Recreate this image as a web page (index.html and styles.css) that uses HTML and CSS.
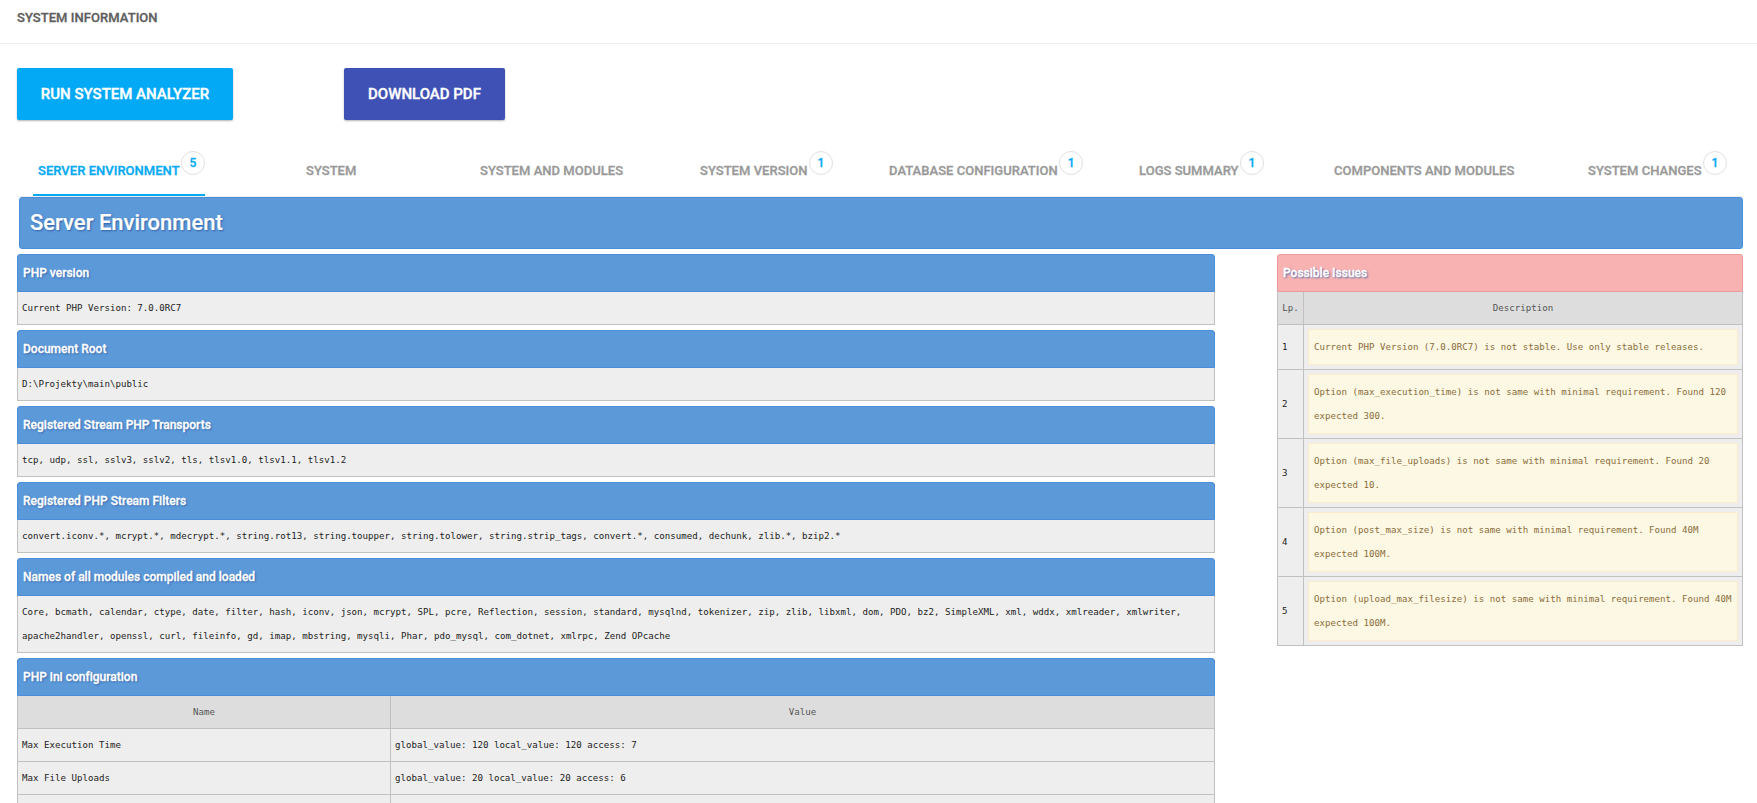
FILE: index.html
```html
<!DOCTYPE html>
<html lang="en">
<head>
<meta charset="utf-8">
<title>System Information</title>
<link rel="stylesheet" href="styles.css">
</head>
<body>
<header class="page-header"><h1>System Information</h1></header>
<main class="content">
  <div class="actions">
    <button class="btn btn-run">Run System Analyzer</button>
    <button class="btn btn-pdf">Download PDF</button>
  </div>
  <nav class="tabs">
    <a class="tab active"><span class="label">Server Environment</span><span class="badge">5</span></a>
    <a class="tab"><span class="label">System</span></a>
    <a class="tab"><span class="label">System and Modules</span></a>
    <a class="tab"><span class="label">System Version</span><span class="badge">1</span></a>
    <a class="tab"><span class="label">Database Configuration</span><span class="badge">1</span></a>
    <a class="tab"><span class="label">Logs Summary</span><span class="badge">1</span></a>
    <a class="tab"><span class="label">Components and Modules</span></a>
    <a class="tab"><span class="label">System Changes</span><span class="badge">1</span></a>
  </nav>
  <h2 class="banner">Server Environment</h2>
  <div class="columns">
    <div class="left">
      <section class="panel"><h3>PHP version</h3><p>Current PHP Version: 7.0.0RC7</p></section>
      <section class="panel"><h3>Document Root</h3><p>D:\Projekty\main\public</p></section>
      <section class="panel"><h3>Registered Stream PHP Transports</h3><p>tcp, udp, ssl, sslv3, sslv2, tls, tlsv1.0, tlsv1.1, tlsv1.2</p></section>
      <section class="panel"><h3>Registered PHP Stream Filters</h3><p>convert.iconv.*, mcrypt.*, mdecrypt.*, string.rot13, string.toupper, string.tolower, string.strip_tags, convert.*, consumed, dechunk, zlib.*, bzip2.*</p></section>
      <section class="panel"><h3>Names of all modules compiled and loaded</h3><p>Core, bcmath, calendar, ctype, date, filter, hash, iconv, json, mcrypt, SPL, pcre, Reflection, session, standard, mysqlnd, tokenizer, zip, zlib, libxml, dom, PDO, bz2, SimpleXML, xml, wddx, xmlreader, xmlwriter, <br>apache2handler, openssl, curl, fileinfo, gd, imap, mbstring, mysqli, Phar, pdo_mysql, com_dotnet, xmlrpc, Zend OPcache</p></section>
      <section class="panel">
        <h3>PHP ini configuration</h3>
        <table class="ini">
          <colgroup><col class="col-name"><col></colgroup>
          <tr><th>Name</th><th>Value</th></tr>
          <tr><td>Max Execution Time</td><td>global_value: 120 local_value: 120 access: 7</td></tr>
          <tr><td>Max File Uploads</td><td>global_value: 20 local_value: 20 access: 6</td></tr>
          <tr><td>&nbsp;</td><td>&nbsp;</td></tr>
        </table>
      </section>
    </div>
    <section class="panel issues">
      <h3>Possible Issues</h3>
      <table>
        <colgroup><col class="col-lp"><col></colgroup>
        <tr><th>Lp.</th><th>Description</th></tr>
        <tr><td>1</td><td><div class="warning">Current PHP Version (7.0.0RC7) is not stable. Use only stable releases.</div></td></tr>
        <tr><td>2</td><td><div class="warning">Option (max_execution_time) is not same with minimal requirement. Found 120<br>expected 300.</div></td></tr>
        <tr><td>3</td><td><div class="warning">Option (max_file_uploads) is not same with minimal requirement. Found 20<br>expected 10.</div></td></tr>
        <tr><td>4</td><td><div class="warning">Option (post_max_size) is not same with minimal requirement. Found 40M<br>expected 100M.</div></td></tr>
        <tr><td>5</td><td><div class="warning">Option (upload_max_filesize) is not same with minimal requirement. Found 40M<br>expected 100M.</div></td></tr>
      </table>
    </section>
  </div>
</main>
</body>
</html>
```
FILE: styles.css
```css
* { box-sizing: border-box; }
html, body { margin: 0; height: 803px; overflow: hidden; }
body { background: #fff; font-family: Roboto, "Open Sans", sans-serif; }
h1, h2, h3, p { margin: 0; }

.page-header { height: 44px; padding: 8px 17px 0; border-bottom: 1px solid #eee; }
.page-header h1 { font-size: 13px; line-height: 20px; font-weight: 500; letter-spacing: .05px; text-transform: uppercase; color: #5e5e5e; -webkit-text-stroke: .3px; }

.content { padding: 24px 14px 0 17px; }
.actions { display: flex; gap: 111px; }
.btn { height: 52px; padding: 0; border: 0; border-radius: 2px; color: #fff; font: 500 15px/52px Roboto, sans-serif; text-transform: uppercase; box-shadow: 0 1px 2px rgba(0, 0, 0, .3); -webkit-text-stroke: .35px; }
.btn-run { width: 216px; background: #03a9f4; }
.btn-pdf { width: 161px; background: #3f51b5; }

.tabs { display: grid; grid-template-columns: 268px 174px 220px 189px 250px 195px 254px 1fr; height: 77px; padding-left: 16px; border-bottom: 1px solid #eee; }
.tab { display: flex; justify-self: start; align-items: flex-start; height: 76px; padding: 31px 0 0 5px; color: #999; font-size: 13px; line-height: 40px; font-weight: 500; letter-spacing: .03px; text-transform: uppercase; white-space: nowrap; -webkit-text-stroke: .3px; }
.tab.active { color: #03a9f4; border-bottom: 2px solid #03a9f4; }
.badge { width: 24px; height: 24px; margin-left: 1.4px; border: 1px solid #e0e0e0; border-radius: 50%; color: #03a9f4; font-size: 12px; line-height: 22px; text-align: center; }

.banner { height: 52px; margin-left: 2px; padding-left: 10px; border: 1px solid #4a8edb; border-radius: 3px; background: #5c99d9; color: #fff; font-size: 22px; line-height: 49px; font-weight: 500; text-shadow: 1px 1px 2px #2f5fa5; -webkit-text-stroke: .2px; }

.columns { display: grid; grid-template-columns: 1198px 466px; gap: 62px; align-items: start; margin-top: 5px; }
.left { display: grid; gap: 5px; }
.panel { font: 9.13px/24px "DejaVu Sans Mono", monospace; color: #222; }
.panel h3 { height: 38px; padding-left: 5px; border: 1px solid #4a8edb; border-radius: 3px 3px 0 0; background: #5c99d9; color: #fff; font: 500 12px/36px Roboto, sans-serif; letter-spacing: .01px; text-shadow: 1px 1px 2px #2f5fa5; -webkit-text-stroke: .3px; }
.panel p { padding: 4px; border: 1px solid #c1c1c1; border-top: 0; background: #eee; white-space: nowrap; }
.panel table { width: 100%; table-layout: fixed; border-spacing: 0; border-left: 1px solid #c1c1c1; background: #eee; }
.panel th, .panel td { padding: 4px; border-right: 1px solid #c1c1c1; border-bottom: 1px solid #c1c1c1; white-space: nowrap; }
.panel th { background: #ddd; color: #555; font-weight: 400; text-align: center; }
.col-name { width: 373px; }
.col-lp { width: 26px; }
.panel.issues h3 { border-color: #e89a9d; background: #f9b2b2; }
.warning { padding: 5px; border: 1px solid #faebcc; background: #fcf8e3; color: #8a6d3b; }
```
